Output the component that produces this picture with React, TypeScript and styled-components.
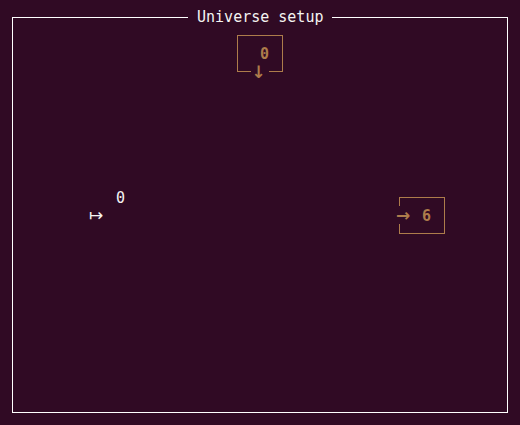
import React from "react";
import styled, { createGlobalStyle } from "styled-components";

const BG = "#300a24";
const FG = "#f4f4f2";
const ORANGE = "#ad7c4b";

const Global = createGlobalStyle`
  html, body { margin: 0; padding: 0; background: ${BG}; }
  body { width: 520px; height: 425px; overflow: hidden; }
`;

const Screen = styled.div`
  display: grid;
  grid-template-columns: repeat(56, 9px);
  grid-template-rows: repeat(23, 18px);
  padding: 8px;
  width: 504px;
  height: 414px;
  background: ${BG};
  font-family: "DejaVu Sans Mono", "Liberation Mono", monospace;
  font-size: 15px;
  line-height: 18px;
  color: ${FG};
`;

type Span = { col: number; row: number; cols?: number; rows?: number };

const place = (p: Span) =>
  `grid-column: ${p.col + 1} / span ${p.cols ?? 1}; grid-row: ${p.row + 1} / span ${p.rows ?? 1};`;

const Frame = styled.div<Span & { $color: string; $mb: number }>`
  ${(p) => place(p)}
  margin: 9px 4px ${(p) => p.$mb}px 4px;
  border: 1px solid ${(p) => p.$color};
`;

const Cell = styled.div<Span & { $color?: string; $bold?: boolean; $align?: string; $pad?: string }>`
  ${(p) => place(p)}
  display: flex;
  align-items: center;
  justify-content: ${(p) => p.$align ?? "flex-start"};
  padding: ${(p) => p.$pad ?? "2px 0 0 0"};
  background: ${BG};
  color: ${(p) => p.$color ?? FG};
  font-weight: ${(p) => (p.$bold ? 700 : 400)};
  white-space: pre;
  overflow: visible;
`;

const Arrow = styled(Cell)`
  font-family: "DejaVu Sans", sans-serif;
  font-size: 17px;
`;

export default function App() {
  return (
    <>
      <Global />
      <Screen>
        <Frame col={0} row={0} cols={56} rows={23} $color="#ffffff" $mb={9} />
        <Cell col={20} row={0} cols={16} $pad="0">{" Universe setup "}</Cell>

        <Frame col={25} row={1} cols={6} rows={3} $color={ORANGE} $mb={8} />
        <Cell col={28} row={2} $color={ORANGE} $bold>0</Cell>
        <Arrow col={27} row={3} cols={2} $color={ORANGE} $bold $align="center" $pad="1px 3px 0 0">↓</Arrow>

        <Cell col={12} row={10}>0</Cell>
        <Arrow col={9} row={11} cols={2} $pad="0">↦</Arrow>

        <Frame col={43} row={10} cols={6} rows={3} $color={ORANGE} $mb={8} />
        <Arrow col={43} row={11} cols={2} $color={ORANGE} $bold $pad="0 0 0 1px">→</Arrow>
        <Cell col={46} row={11} $color={ORANGE} $bold>6</Cell>
      </Screen>
    </>
  );
}
